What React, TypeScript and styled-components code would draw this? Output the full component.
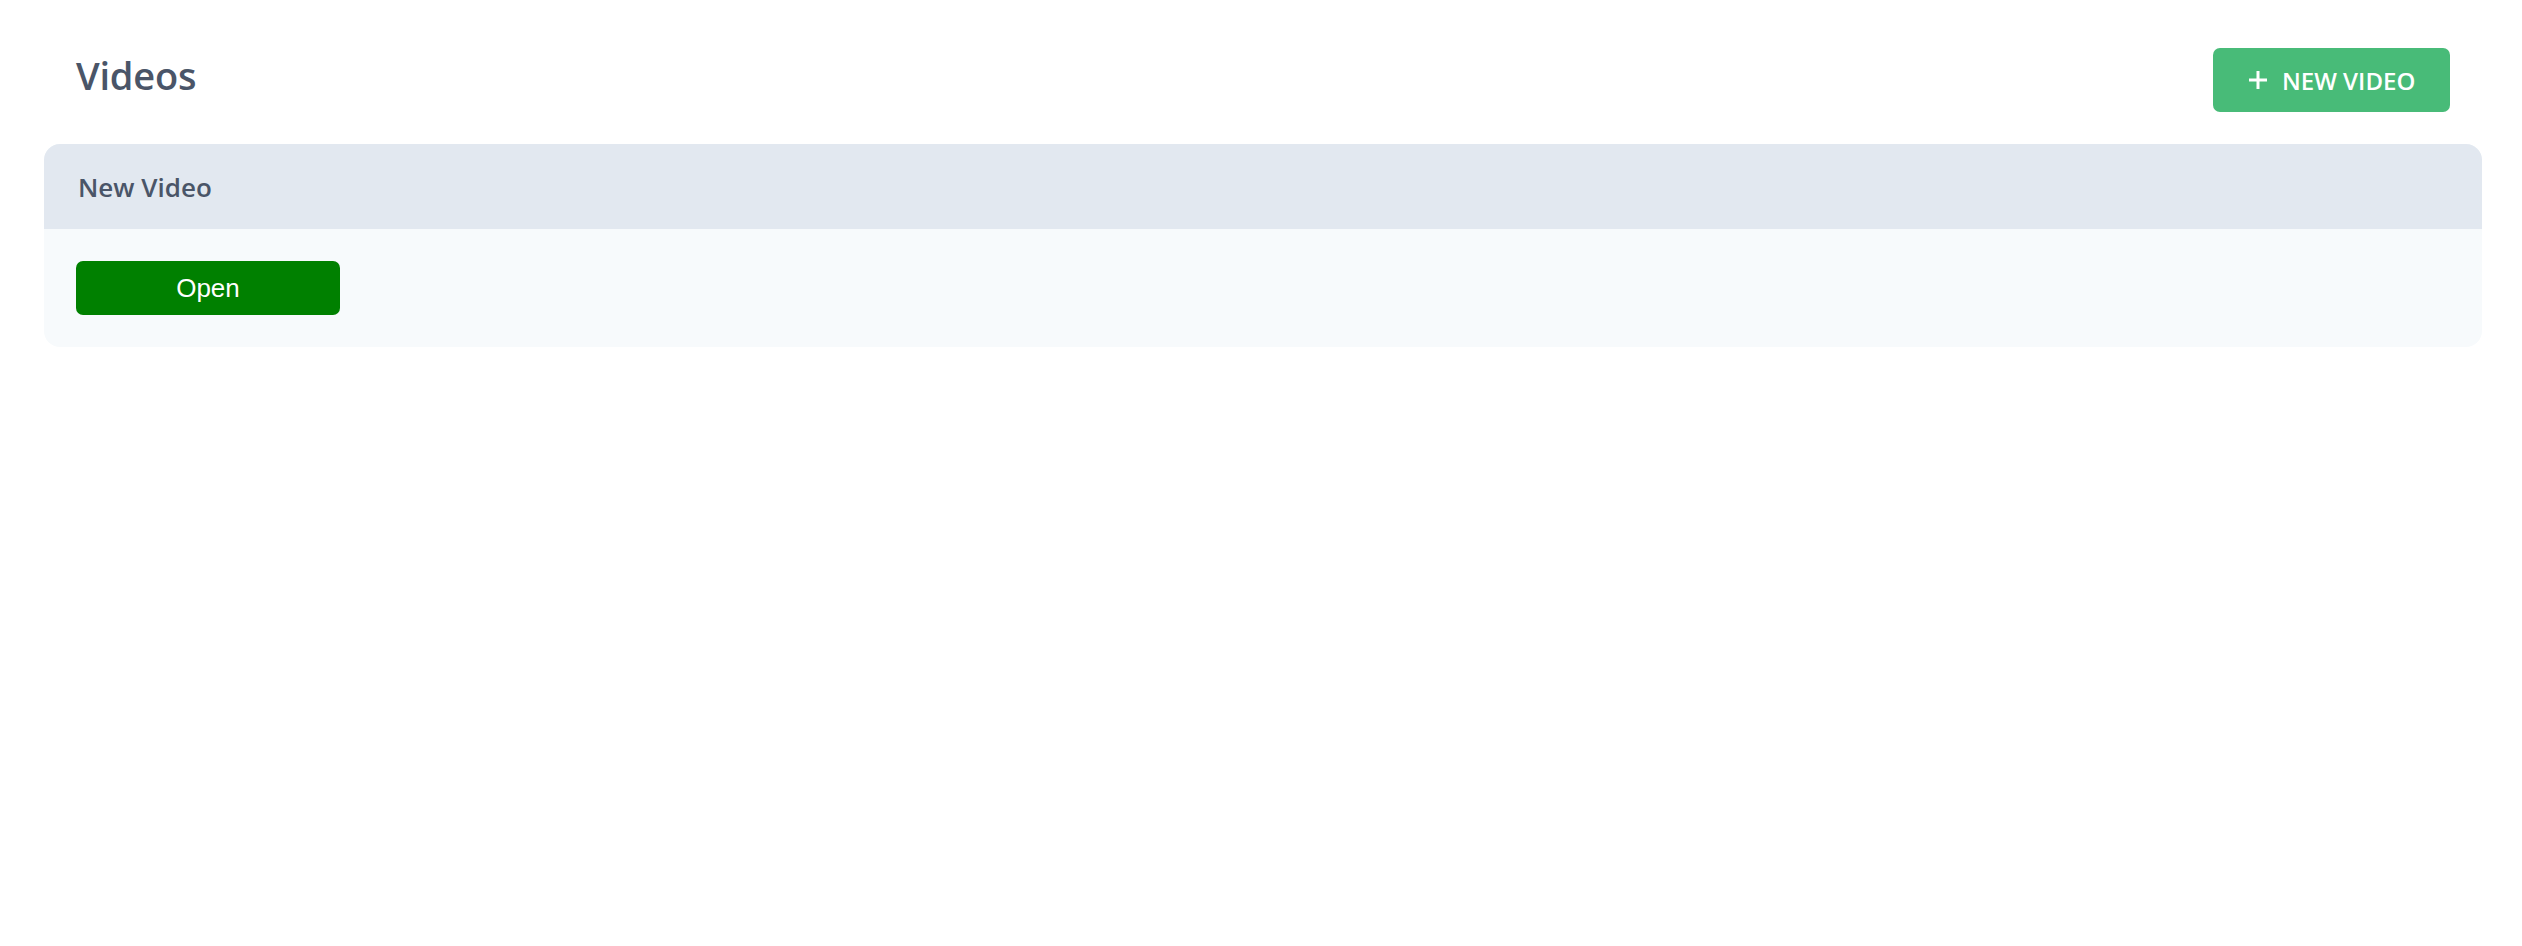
import styled, { createGlobalStyle } from "styled-components";

const GlobalStyle = createGlobalStyle`
  html, body {
    margin: 0;
    padding: 0;
    background: #ffffff;
  }
  body {
    font-family: "Open Sans", "Noto Sans", sans-serif;
    color: #4a5568;
  }
`;

interface Video {
  id: number;
  title: string;
}

const videos: Video[] = [{ id: 1, title: "New Video" }];

function App() {
  return (
    <>
      <GlobalStyle />
      <Page>
        <Header>
          <Title>Videos</Title>
          <NewButton>
            <svg width="20" height="20" viewBox="0 0 20 20" fill="none">
              <path
                d="M10 1v18M1 10h18"
                stroke="#ffffff"
                strokeWidth="3"
              />
            </svg>
            New Video
          </NewButton>
        </Header>
        <List>
          {videos.map((video) => (
            <Card key={video.id}>
              <CardHeader>{video.title}</CardHeader>
              <CardBody>
                <OpenButton>Open</OpenButton>
              </CardBody>
            </Card>
          ))}
        </List>
      </Page>
    </>
  );
}
export default App;

const Page = styled.div`
  padding: 0 40px 0 44px;
`;

const Header = styled.header`
  display: flex;
  justify-content: space-between;
  align-items: center;
  padding: 48px 32px 32px 32px;
`;

const Title = styled.h1`
  margin: 0 0 10px 0;
  font-size: 38px;
  font-weight: 600;
  color: #4a5568;
  letter-spacing: -0.2px;
`;

const NewButton = styled.button`
  display: flex;
  align-items: center;
  gap: 14px;
  height: 64px;
  width: 237px;
  padding: 0 0 0 35px;
  border: none;
  border-radius: 7px;
  background: #48bb78;
  color: #ffffff;
  font-family: "Open Sans", "Noto Sans", sans-serif;
  font-size: 24px;
  font-weight: 600;
  text-transform: uppercase;
  cursor: pointer;
`;

const List = styled.div`
  display: flex;
  flex-direction: column;
  gap: 16px;
`;

const Card = styled.div`
  border-radius: 16px;
  overflow: hidden;
  background: #f7fafc;
`;

const CardHeader = styled.div`
  display: flex;
  align-items: center;
  height: 85px;
  padding: 0 34px;
  background: #e2e8f0;
  font-size: 26px;
  font-weight: 600;
  color: #4a5568;
`;

const CardBody = styled.div`
  padding: 32px;
`;

const OpenButton = styled.button`
  display: block;
  width: 264px;
  height: 54px;
  border: none;
  border-radius: 7px;
  background: #008000;
  color: #ffffff;
  font-family: "Liberation Sans", Arial, sans-serif;
  font-size: 26px;
  cursor: pointer;
`;
